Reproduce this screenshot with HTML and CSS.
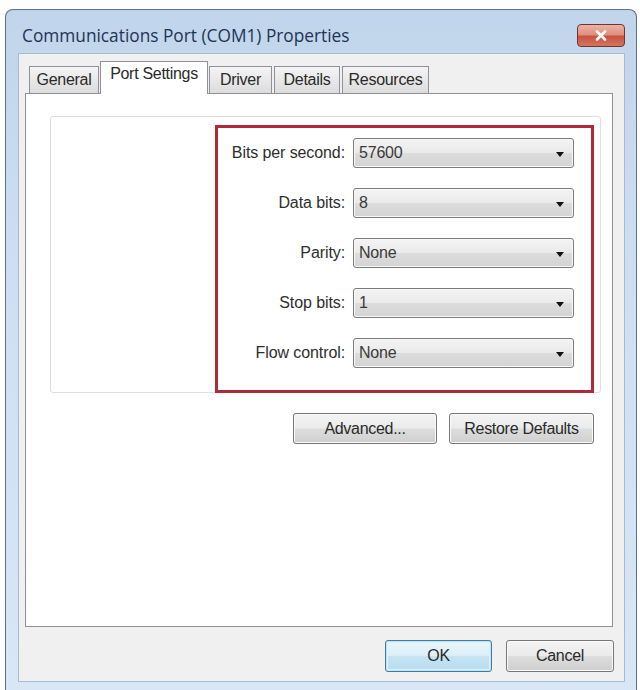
FILE: index.html
```html
<!DOCTYPE html>
<html>
<head>
<meta charset="utf-8">
<link rel="stylesheet" href="styles.css">
</head>
<body>
<div class="window">
  <div class="titlebar">
    <span class="title">Communications Port (COM1) Properties</span>
    <span class="close"><svg width="12" height="11" viewBox="0 0 12 11"><path d="M2 1.5 L10 9.5 M10 1.5 L2 9.5" stroke="#fff" stroke-width="2.6" stroke-linecap="round"/></svg></span>
  </div>
  <div class="client">
    <div class="tabs">
      <div class="tab t-general">General</div>
      <div class="tab active t-port">Port Settings</div>
      <div class="tab t-driver">Driver</div>
      <div class="tab t-details">Details</div>
      <div class="tab t-res">Resources</div>
    </div>
    <div class="panel">
      <div class="group">
        <div class="highlight">
          <label class="lbl">Bits per second:</label>
          <div class="combo"><span>57600</span><i class="arrow"></i></div>
          <label class="lbl">Data bits:</label>
          <div class="combo"><span>8</span><i class="arrow"></i></div>
          <label class="lbl">Parity:</label>
          <div class="combo"><span>None</span><i class="arrow"></i></div>
          <label class="lbl">Stop bits:</label>
          <div class="combo"><span>1</span><i class="arrow"></i></div>
          <label class="lbl">Flow control:</label>
          <div class="combo"><span>None</span><i class="arrow"></i></div>
        </div>
      </div>
      <div class="panel-buttons">
        <button class="btn adv">Advanced...</button>
        <button class="btn restore">Restore Defaults</button>
      </div>
    </div>
    <div class="dialog-buttons">
      <button class="btn ok">OK</button>
      <button class="btn cancel">Cancel</button>
    </div>
  </div>
</div>
</body>
</html>
```

FILE: styles.css
```css
html, body {
  margin: 0;
  padding: 0;
  background: #ffffff;
}
body {
  width: 640px;
  height: 690px;
  overflow: hidden;
  font-family: "Liberation Sans", Arial, sans-serif;
}
.window {
  box-sizing: border-box;
  margin: 9px 0 0 5px;
  width: 632px;
  height: 681px;
  border: 1px solid #5d7189;
  border-bottom: none;
  border-radius: 8px 8px 0 0;
  background: linear-gradient(180deg, #c0d5eb 0%, #cfdff1 40%, #d8e6f5 100%);
  padding: 0 11px 8px 12px;
  display: flex;
  flex-direction: column;
}
.titlebar {
  height: 43px;
  display: flex;
  align-items: center;
  justify-content: space-between;
  padding: 0 0 0 4px;
}
.title {
  font-family: "Open Sans", "Noto Sans", sans-serif;
  font-size: 17.3px;
  color: #1e3456;
  margin-top: 7px;
}
.close {
  width: 46px;
  height: 21px;
  margin-top: 7px;
  border: 1px solid #70352c;
  border-radius: 4px;
  background: linear-gradient(180deg, #ecb3a6 0%, #e08f7e 45%, #c9523e 55%, #d37560 100%);
  display: flex;
  align-items: center;
  justify-content: center;
}
.client {
  flex: 1;
  background: #f0f0f0;
  border: 1px solid #a6bad0;
  padding: 8px 11px 0 6px;
  display: flex;
  flex-direction: column;
}
.tabs {
  display: flex;
  align-items: flex-end;
  padding-left: 4px;
  height: 32px;
  position: relative;
  z-index: 1;
  margin-bottom: -1px;
}
.tab {
  height: 27px;
  box-sizing: border-box;
  border: 1px solid #8e9199;
  border-bottom: none;
  background: linear-gradient(180deg, #f4f4f4 0%, #e8e8e8 50%, #dcdcdc 100%);
  font-size: 16px;
  letter-spacing: -0.3px;
  color: #2a2a2a;
  padding-top: 4px;
  text-align: center;
  margin-bottom: 1px;
}
.t-general { width: 70px; }
.t-port { width: 108px; }
.t-driver { width: 63px; margin-left: 1px; }
.t-details { width: 66px; margin-left: 2px; }
.t-res { width: 87px; margin-left: 2px; }
.tab.active {
  height: 33px;
  background: #ffffff;
  padding-top: 3px;
  margin: 0 0 0 1px;
  position: relative;
  z-index: 2;
}
.panel {
  box-sizing: border-box;
  height: 534px;
  background: #ffffff;
  border: 1px solid #8e9199;
  padding: 22px 11px 0 24px;
  display: flex;
  flex-direction: column;
}
.group {
  box-sizing: border-box;
  height: 277px;
  border: 1px solid #dedede;
  border-radius: 3px;
  display: flex;
  justify-content: flex-end;
  align-items: flex-start;
  padding: 8px 6px 0 0;
}
.highlight {
  box-sizing: border-box;
  width: 379px;
  height: 268px;
  border: 3px solid #b02a3c;
  display: grid;
  grid-template-columns: auto 221px;
  grid-auto-rows: 30px;
  row-gap: 20px;
  column-gap: 8px;
  justify-content: end;
  align-items: center;
  padding: 10px 17px 0 8px;
}
.lbl {
  justify-self: end;
  font-size: 16px;
  letter-spacing: -0.1px;
  color: #2e2e2e;
}
.combo {
  box-sizing: border-box;
  height: 30px;
  border: 1px solid #7b7b7b;
  border-radius: 3px;
  background: linear-gradient(180deg, #f4f4f4 0%, #eaeaea 48%, #dcdcdc 52%, #d4d4d4 100%);
  display: flex;
  align-items: center;
  justify-content: space-between;
  padding: 0 9px 0 5px;
  font-size: 16px;
  letter-spacing: -0.2px;
  color: #3a3a3a;
  box-shadow: inset 0 0 0 1px #f8f8f8;
}
.arrow {
  width: 0;
  height: 0;
  border-left: 4px solid transparent;
  border-right: 4px solid transparent;
  border-top: 5px solid #111111;
  margin-top: 2px;
}
.btn {
  box-sizing: border-box;
  font-family: "Liberation Sans", Arial, sans-serif;
  font-size: 16px;
  letter-spacing: -0.3px;
  color: #2a2a2a;
  border: 1px solid #767676;
  border-radius: 3px;
  background: linear-gradient(180deg, #f3f3f3 0%, #ebebeb 48%, #dddddd 52%, #cfcfcf 100%);
  box-shadow: inset 0 0 0 1px #fafafa;
  padding: 0;
  margin: 0;
}
.panel-buttons {
  display: flex;
  justify-content: flex-end;
  gap: 12px;
  margin-top: 20px;
  padding-right: 7px;
}
.adv { width: 144px; height: 31px; }
.restore { width: 145px; height: 31px; }
.dialog-buttons {
  display: flex;
  justify-content: flex-end;
  gap: 14px;
  margin-top: 13px;
}
.ok {
  width: 107px;
  height: 32px;
  border-color: #3b7ca8;
  box-shadow: inset 0 0 0 1px #bfe3f5, inset 0 0 0 2px #dff2fb;
  background: linear-gradient(180deg, #eaf6fc 0%, #dceff9 48%, #c5e4f4 52%, #b7dcef 100%);
}
.cancel { width: 108px; height: 32px; margin-right: -1px; }
```
